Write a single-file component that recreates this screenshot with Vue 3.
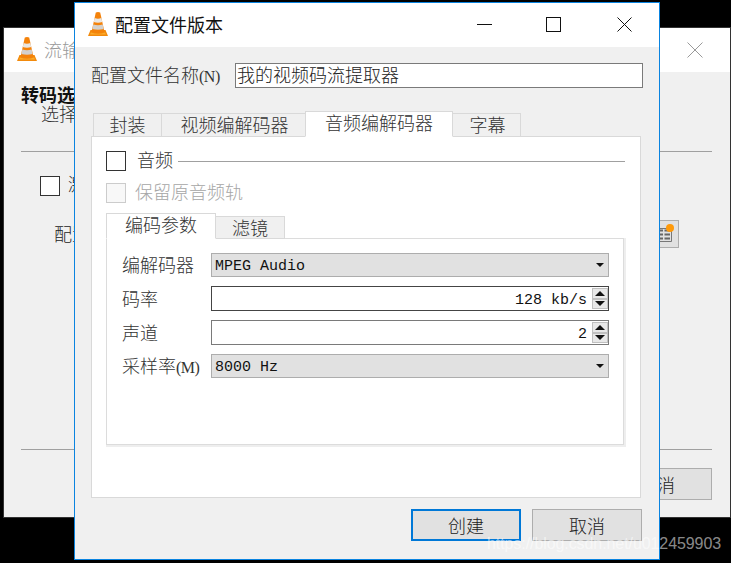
<template>
  <div class="desktop">
    <!-- window behind -->
    <div class="win win-back">
      <div class="titlebar back-title">
        <svg class="cone" viewBox="0 0 20 24"><use href="#vlc-cone" /></svg>
        <span class="title-text">流输出</span>
        <svg class="back-close" viewBox="0 0 16 16"><path d="M0.5 0.5L15.5 15.500M15.500 0.500L0.500 15.500" /></svg>
      </div>
      <div class="back-body">
        <div class="back-head">转码选项</div>
        <div class="back-sub">选择一个转码配置</div>
        <div class="rule back-rule1"></div>
        <div class="back-check">
          <span class="check"></span>
          <span>激活转码</span>
        </div>
        <div class="back-profile">
          <span class="profile-label">配置文件</span>
          <span class="list-btn">
            <svg viewBox="0 0 24 28" width="24" height="28">
              <path d="M0 8.500H16.500V21.500H0" fill="none" stroke="#777" stroke-width="1" />
              <path d="M5 10.500H8M9.500 10.500H15M5 14.500H8M9.500 14.500H15M5 18.500H8M9.500 18.500H15" stroke="#666" stroke-width="2" />
            </svg>
            <span class="dot"></span>
          </span>
        </div>
        <div class="rule back-rule2"></div>
        <div class="back-foot"><button class="btn">取消</button></div>
      </div>
    </div>

    <!-- front dialog -->
    <div class="win win-front">
      <div class="titlebar front-title">
        <svg class="cone" viewBox="0 0 20 24">
          <defs>
            <g id="vlc-cone">
              <path d="M0 24L2.500 18H17.500L20 24Z" fill="#f28a0c" />
              <path d="M7.800 0.500Q10 -0.300 12.200 0.500L16.500 20Q10 22.500 3.500 20Z" fill="#f4820a" />
              <path d="M6.600 6Q10 7.300 13.400 6L14.200 10Q10 11.400 5.800 10Z" fill="#e9e6e2" />
              <path d="M5.300 12.500Q10 14 14.700 12.500L15.600 17Q10 18.600 4.400 17Z" fill="#d3d0cc" />
              <path d="M3 20.500Q10 23 17 20.500L18 22.500H2Z" fill="#fbab2c" />
            </g>
          </defs>
          <use href="#vlc-cone" />
        </svg>
        <span class="title-text front-text">配置文件版本</span>
        <div class="win-controls">
          <svg class="ctl" viewBox="0 0 15 15"><path d="M0 7.500H15" /></svg>
          <svg class="ctl" viewBox="0 0 15 15"><rect x="0.500" y="0.500" width="14" height="14" /></svg>
          <svg class="ctl" viewBox="0 0 15 15"><path d="M0.500 0.500L14.500 14.500M14.500 0.500L0.500 14.500" /></svg>
        </div>
      </div>

      <div class="front-body">
        <div class="name-row">
          <label>配置文件名称<span class="hotkey">(N)</span></label>
          <div class="name-input">我的视频码流提取器</div>
        </div>

        <div class="tabs outer-tabs">
          <div v-for="t in outerTabs" :key="t.label" class="tab" :class="{ active: t.active }" :style="{ width: t.width + 'px' }">{{ t.label }}</div>
        </div>

        <div class="pane">
          <div class="audio-row">
            <span class="check"></span>
            <span class="audio-label">音频</span>
            <span class="audio-line"></span>
          </div>
          <div class="keep-row">
            <span class="check disabled"></span>
            <span class="keep-label">保留原音频轨</span>
          </div>

          <div class="tabs inner-tabs">
            <div class="tab active" style="width: 110px">编码参数</div>
            <div class="tab" style="width: 69px">滤镜</div>
          </div>
          <div class="inner-pane">
            <div v-for="row in rows" :key="row.label" class="form-row" :style="{ height: row.height + 'px', marginBottom: row.gap + 'px' }">
              <span class="form-label">{{ row.label }}<span v-if="row.hotkey" class="hotkey">{{ row.hotkey }}</span></span>
              <div v-if="row.kind === 'combo'" class="combo">
                <span class="combo-val">{{ row.value }}</span>
                <i class="arrow-down"></i>
              </div>
              <div v-else class="spin" :class="{ focus: row.focus }">
                <span class="spin-val">{{ row.value }}</span>
                <div class="spin-btns">
                  <span class="spin-btn"><i class="arrow-up"></i></span>
                  <span class="spin-btn"><i class="arrow-down big"></i></span>
                </div>
              </div>
            </div>
          </div>
        </div>

        <div class="actions">
          <button class="btn primary">创建</button>
          <button class="btn">取消</button>
        </div>
      </div>
    </div>

    <div class="watermark">https://blog.csdn.net/u012459903</div>
  </div>
</template>

<script setup>
const outerTabs = [
  { label: '封装', width: 69 },
  { label: '视频编解码器', width: 144 },
  { label: '音频编解码器', width: 148, active: true },
  { label: '字幕', width: 68 }
]

const rows = [
  { label: '编解码器', kind: 'combo', value: 'MPEG Audio', height: 24, gap: 9 },
  { label: '码率', kind: 'spin', value: '128 kb/s', height: 25, gap: 9, focus: true },
  { label: '声道', kind: 'spin', value: '2', height: 25, gap: 9 },
  { label: '采样率', hotkey: '(M)', kind: 'combo', value: '8000 Hz', height: 24, gap: 0 }
]
</script>

<style>
html, body {
  margin: 0;
  background: #000;
}
</style>

<style scoped>
.desktop {
  position: relative;
  width: 731px;
  height: 563px;
  overflow: hidden;
  background: #000;
  color: #222;
  font-family: "Liberation Mono", "Noto Sans CJK SC", monospace;
  font-size: 16px;
  font-weight: 300;
}

.win {
  position: absolute;
  box-sizing: border-box;
  background: #f0f0f0;
  display: flex;
  flex-direction: column;
}

.win-back {
  left: 3px;
  top: 27px;
  width: 728px;
  height: 491px;
  border: 1px solid #333;
}

.win-front {
  left: 74px;
  top: 2px;
  width: 586px;
  height: 558px;
  border: 1px solid #0a84e0;
}

.titlebar {
  display: flex;
  align-items: center;
  background: #fff;
  flex: none;
}

.back-title {
  height: 44px;
  padding-left: 13px;
  position: relative;
}

.front-title {
  height: 44px;
  padding-left: 13px;
}

.cone {
  width: 20px;
  height: 24px;
  flex: none;
  margin-top: -2px;
  overflow: visible;
}

.title-text {
  margin-left: 7px;
  padding-bottom: 2px;
  font-size: 18px;
  color: #999;
}

.front-text {
  color: #111;
  font-weight: 400;
}

.back-close {
  position: absolute;
  left: 683px;
  top: 14px;
  width: 16px;
  height: 16px;
  fill: none;
  stroke: #999;
  stroke-width: 1;
}

.win-controls {
  margin-left: auto;
  align-self: flex-start;
  display: flex;
  gap: 56px;
  padding: 14px 27px 0 0;
}

.ctl {
  display: block;
  width: 15px;
  height: 15px;
  fill: none;
  stroke: #111;
  stroke-width: 1;
}

.ctl:first-child {
  margin-right: -2px;
}

.back-body {
  flex: 1;
  padding: 16px 18px 0 17px;
  display: flex;
  flex-direction: column;
}

.back-head {
  font-weight: 700;
  font-size: 18px;
  line-height: 18px;
  color: #111;
}

.back-sub {
  margin-left: 20px;
  font-size: 18px;
  line-height: 20px;
  color: #333;
}

.rule {
  height: 1px;
  background: #a0a0a0;
  flex: none;
}

.back-rule1 {
  margin-top: 25px;
}

.back-check {
  display: flex;
  align-items: center;
  gap: 8px;
  margin: 24px 0 0 19px;
  font-size: 18px;
  line-height: 20px;
}

.back-profile {
  display: flex;
  justify-content: space-between;
  align-items: center;
  margin: 24px 33px 0 33px;
  font-size: 18px;
  height: 28px;
}

.profile-label {
  padding-bottom: 2px;
}

.list-btn {
  position: relative;
  box-sizing: border-box;
  width: 24px;
  height: 28px;
  background: #e1e1e1;
  border: 1px solid #adadad;
  border-width: 1px 1px 1px 0;
  margin-left: auto;
  display: block;
}

.list-btn svg {
  display: block;
  margin-top: -1px;
}

.dot {
  position: absolute;
  right: 4px;
  top: 3px;
  width: 8px;
  height: 8px;
  border-radius: 50%;
  background: #ff9a0a;
}

.back-rule2 {
  margin-top: 201px;
}

.back-foot {
  display: flex;
  justify-content: flex-end;
  margin-top: 18px;
}

.check {
  display: block;
  box-sizing: border-box;
  width: 20px;
  height: 20px;
  background: #fff;
  border: 1px solid #333;
  flex: none;
}

.check.disabled {
  border-color: #ccc;
  background: #f8f8f8;
}

.front-body {
  flex: 1;
  display: flex;
  flex-direction: column;
  padding: 16px 16px 0 16px;
}

.name-row {
  display: flex;
  align-items: center;
  height: 25px;
}

.name-row label {
  width: 144px;
  flex: none;
  padding-top: 3px;
  color: #333;
  font-size: 18px;
  line-height: 25px;
}

.hotkey {
  font-family: "Liberation Serif", serif;
  font-size: 16px;
  letter-spacing: -0.5px;
}

.name-input {
  box-sizing: border-box;
  flex: 1;
  height: 25px;
  background: #fff;
  border: 1px solid #7a7a7a;
  padding-left: 1px;
  font-size: 18px;
  line-height: 27px;
  color: #222;
}

.tabs {
  display: flex;
  align-items: flex-end;
}

.outer-tabs {
  margin-top: 23px;
  margin-left: 2px;
  height: 26px;
  position: relative;
  z-index: 1;
  margin-bottom: -1px;
}

.tab {
  box-sizing: border-box;
  height: 24px;
  background: #f0f0f0;
  border: 1px solid #d9d9d9;
  border-left-width: 0;
  font-size: 18px;
  line-height: 26px;
  text-align: center;
  color: #333;
}

.tab + .tab {
  padding-left: 2px;
}

.tab:first-child {
  border-left-width: 1px;
}

.tab.active {
  height: 26px;
  background: #fff;
  border-bottom-color: #fff;
  border-left-width: 1px;
  margin-left: -1px;
  padding-left: 0;
  line-height: 26px;
}

.pane {
  box-sizing: border-box;
  width: 550px;
  height: 362px;
  background: #fff;
  border: 1px solid #d9d9d9;
  padding: 14px 15px 0 14px;
}

.audio-row {
  display: flex;
  align-items: center;
  height: 20px;
}

.audio-label {
  margin-left: 11px;
  padding-bottom: 4px;
  font-size: 18px;
  color: #333;
}

.audio-line {
  flex: 1;
  height: 1px;
  margin-left: 5px;
  background: #a0a0a0;
}

.keep-row {
  display: flex;
  align-items: center;
  gap: 9px;
  height: 20px;
  margin-top: 12px;
  font-size: 18px;
  color: #a6a6a6;
}

.keep-label {
  padding-bottom: 5px;
}

.inner-tabs {
  margin-top: 10px;
  margin-left: 1px;
  height: 26px;
  position: relative;
  z-index: 1;
  margin-bottom: -1px;
}

.inner-tabs .tab {
  height: 23px;
  line-height: 26px;
  padding-left: 0;
}

.inner-tabs .tab.active {
  height: 26px;
}

.inner-pane {
  box-sizing: border-box;
  width: 518px;
  height: 207px;
  border: 1px solid #dcdcdc;
  box-shadow: 1px 1px 0 1px #eee;
  padding: 14px 14px 0 15px;
}

.form-row {
  display: flex;
  align-items: center;
}

.form-label {
  width: 89px;
  flex: none;
  padding-bottom: 2px;
  font-size: 18px;
  color: #333;
}

.combo {
  box-sizing: border-box;
  flex: 1;
  height: 100%;
  display: flex;
  align-items: center;
  justify-content: space-between;
  padding: 0 4px 0 3px;
  background: #e1e1e1;
  border: 1px solid #adadad;
  font-size: 15px;
  font-weight: 400;
  color: #111;
}

.combo-val {
  padding-top: 2px;
}

.spin {
  box-sizing: border-box;
  flex: 1;
  height: 100%;
  display: flex;
  align-items: center;
  background: #fff;
  border: 1px solid #7a7a7a;
  font-size: 15px;
  font-weight: 400;
}

.spin.focus {
  border-color: #444;
}

.spin-val {
  flex: 1;
  text-align: right;
  padding: 3px 5px 0 0;
  color: #111;
}

.spin-btns {
  box-sizing: border-box;
  display: flex;
  flex-direction: column;
  width: 16px;
  height: 100%;
  padding: 1px 0;
  flex: none;
}

.spin-btn {
  flex: 1;
  display: flex;
  align-items: center;
  justify-content: center;
  box-sizing: border-box;
  background: #e8e8e8;
  border: 1px solid #c0c0c0;
}

.arrow-down,
.arrow-up {
  display: block;
  width: 0;
  height: 0;
  border-left: 4px solid transparent;
  border-right: 4px solid transparent;
}

.arrow-down {
  border-top: 4px solid #111;
}

.arrow-up {
  border-bottom: 5px solid #111;
  border-left-width: 5px;
  border-right-width: 5px;
}

.arrow-down.big {
  border-top-width: 5px;
  border-left-width: 5px;
  border-right-width: 5px;
}

.actions {
  display: flex;
  justify-content: flex-end;
  gap: 11px;
  margin-top: 11px;
  padding-right: 1px;
}

.btn {
  box-sizing: border-box;
  width: 110px;
  height: 32px;
  padding: 0;
  background: #e1e1e1;
  border: 1px solid #adadad;
  color: #222;
  font-family: inherit;
  font-size: 18px;
  font-weight: 300;
}

.btn.primary {
  border: 2px solid #0078d7;
}

.watermark {
  position: absolute;
  left: 487px;
  top: 535px;
  font-family: "Liberation Sans", sans-serif;
  font-size: 16px;
  font-weight: 400;
  line-height: 18px;
  color: rgba(255, 255, 255, 0.55);
  letter-spacing: -0.08px;
  white-space: nowrap;
  pointer-events: none;
}
</style>
